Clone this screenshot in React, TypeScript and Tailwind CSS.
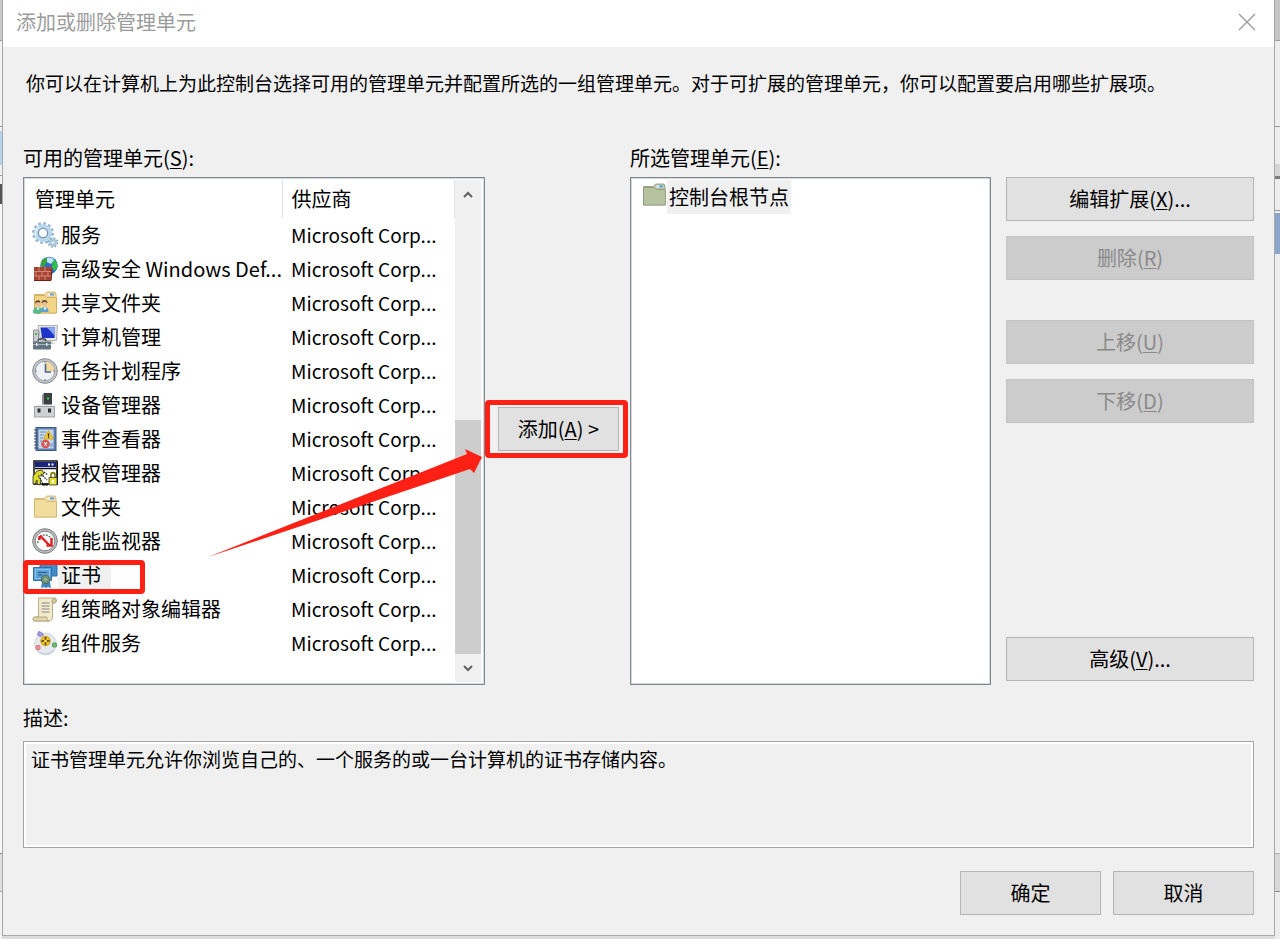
import type { ReactNode } from "react";
import { clsx } from "clsx";

function Icon({ children }: { children: ReactNode }) {
  return (
    <svg viewBox="0 0 26 26" className="h-[26px] w-[26px] shrink-0" aria-hidden="true">
      {children}
    </svg>
  );
}

function GearsIcon() {
  return (
    <Icon>
      <circle cx="11" cy="11" r="9.6" fill="none" stroke="#8fb4cf" strokeWidth="2.6" strokeDasharray="2.6 2.43" />
      <circle cx="11" cy="11" r="6.8" fill="none" stroke="#b9d6ea" strokeWidth="4.4" />
      <circle cx="11" cy="11" r="4.600" fill="#fff" stroke="#7396b6" strokeWidth="1.300" />
      <path d="M4 14a8 8 0 0 1 3-9" fill="none" stroke="#e4f1fa" strokeWidth="1.500" />
      <circle cx="21" cy="20.500" r="4.300" fill="none" stroke="#7f9fb8" strokeWidth="2" strokeDasharray="1.700 1.670" />
      <circle cx="21" cy="20.500" r="2.800" fill="none" stroke="#a9c8dd" strokeWidth="2.400" />
      <circle cx="21" cy="20.500" r="1.500" fill="#fff" stroke="#7f9fb8" strokeWidth=".5" />
    </Icon>
  );
}

function FirewallIcon() {
  return (
    <Icon>
      <circle cx="17" cy="9.500" r="8.700" fill="#2a6fd0" />
      <path d="M9 7c1-4 4-5 6-5l1 4-3 2-1 4-3 0z" fill="#39a33c" />
      <path d="M20 3c4 1 6 5 5.500 8l-3 4-3-4 1-3z" fill="#2fbf45" />
      <path d="M15 2c3-1 6 0 7 2l-3 4-4-2z" fill="#bfe6fa" />
      <path d="M2 11h18v5l-1 9H2z" fill="#a84334" />
      <path d="M2 15.500h17M2 20h17M7 11v4.500M13 11v4.500M4 15.500V20M10 15.500V20M16 15.500V20M7 20v5M13 20v5" stroke="#d89a86" strokeWidth=".8" fill="none" />
      <path d="M2 24.500h17l1-12" stroke="#6d1e18" fill="none" />
    </Icon>
  );
}

interface FolderShapeProps {
  body: string;
  tab: string;
  line: string;
}

function FolderShape({ body, tab, line }: FolderShapeProps) {
  return (
    <>
      <path d="M2.500 4.500h10l2-2.500h8.500l1 2v19h-21.500z" fill={tab} stroke={line} strokeWidth=".8" />
      <path d="M2.500 5.500h10.500l2 2h9.500v15.500h-22z" fill={body} stroke={line} strokeWidth=".8" />
      <rect x="15" y="3" width="8" height="3" rx="1" fill="#f4f8fa" stroke={line} strokeWidth=".5" />
      <rect x="18" y="3.600" width="4" height="1.700" fill="#4a9ae0" />
    </>
  );
}

function FolderIcon() {
  return (
    <Icon>
      <FolderShape body="#f3dd9c" tab="#f8e7b4" line="#cfae68" />
    </Icon>
  );
}

function RootFolderIcon() {
  return (
    <Icon>
      <FolderShape body="#b7c3a0" tab="#c5d0ae" line="#88947a" />
    </Icon>
  );
}

function SharedFolderIcon() {
  return (
    <Icon>
      <FolderShape body="#f3d588" tab="#f8e7b4" line="#cfa450" />
      <path d="M1 23c0-5 2-6 4.500-6s4 1 4.500 4l-2 3z" fill="#57b98a" />
      <path d="M8.500 22c0-4 2-5 4-5s4 1 4 5z" fill="#5aa2d4" />
      <circle cx="6" cy="14" r="2.500" fill="#e8bd94" />
      <circle cx="12.500" cy="13.500" r="2.500" fill="#e8bd94" />
      <path d="M3 13.500c0-4 5.500-4 5.500-1l-3-.5zM9.500 13c0-4 6-4 6 0l-3-1.500z" fill="#5b3f28" />
      <path d="M4.500 17.500l1.500 3 1.500-3zM11.500 17.500l1.500 3 1.500-3z" fill="#fff" />
    </Icon>
  );
}

function ComputerIcon() {
  return (
    <Icon>
      <path d="M1.500 6h5v12h-5z" fill="#c9ccd0" stroke="#8a8f95" />
      <rect x="3" y="9" width="2" height="2" fill="#42b842" />
      <path d="M6 1.500h19.500l-1 15H8.500z" fill="#e3e3df" stroke="#a5a5a0" strokeWidth=".8" />
      <path d="M8.500 3.500h14.500l-.5 10.500H10z" fill="#1c35c8" />
      <path d="M15 3.500h8l-.5 8z" fill="#8ca5f5" />
      <path d="M12 17h8l3 3h-9z" fill="#cfd0ce" />
      <path d="M6 17c0-3 8-3 8 0" fill="none" stroke="#394850" strokeWidth="1.300" />
      <rect x="1" y="17.500" width="18" height="8" rx="1" fill="#60737e" />
      <path d="M1 20.500h18" stroke="#a6b6be" />
      <rect x="4" y="19" width="1.500" height="3" fill="#dce2e4" />
      <rect x="14" y="19" width="1.500" height="3" fill="#dce2e4" />
    </Icon>
  );
}

function ClockIcon() {
  return (
    <Icon>
      <circle cx="13" cy="13" r="12.300" fill="#c4c8cb" stroke="#83888c" />
      <circle cx="13" cy="13" r="9.800" fill="#eef2f6" stroke="#9aa2a8" />
      <path d="M13 13V3.700a9.300 9.300 0 0 1 9.300 9.300z" fill="#f3d9a0" />
      <path d="M13.500 6v8h5.500" fill="none" stroke="#4b6488" strokeWidth="1.600" />
      <path d="M13 3.500v1.500M13 21v1.500M3.500 13H5M21 13h1.500" stroke="#777" />
    </Icon>
  );
}

function DeviceIcon() {
  return (
    <Icon>
      <path d="M10 4l2-3h8v13H10z" fill="#3c3f41" />
      <path d="M10 4l2-3v13h-2z" fill="#8c9092" />
      <rect x="15" y="5.500" width="2" height="2" fill="#2ee04a" />
      <path d="M4 12.500h17l1.500 3H2z" fill="#ececec" />
      <rect x="2.500" y="14.500" width="20" height="10.500" fill="#d0d1d3" stroke="#a2a4a6" />
      <rect x="5.500" y="16.500" width="3" height="4" fill="#303030" />
      <rect x="16" y="16.500" width="3" height="4" fill="#303030" />
    </Icon>
  );
}

function EventIcon() {
  return (
    <Icon>
      <rect x="4" y="1.500" width="20" height="23" fill="#5d80b0" stroke="#3d5a85" />
      <rect x="6.500" y="3.500" width="15" height="19" fill="#c6d8ee" />
      <path d="M8 6h6M8 9h4M8 12h3M8 15h2M18 18h3M18 20h3" stroke="#6e8fb8" />
      <path d="M2 4h4M2 7h4M2 10h4M2 13h4M2 16h4M2 19h4M2 22h4" stroke="#414d5c" />
      <path d="M16.500 4.500l5 8.500h-10z" fill="#f8cf2c" stroke="#bf9410" strokeWidth=".7" />
      <path d="M16.500 7.500v3M16.500 11v1" stroke="#222" strokeWidth="1.300" />
      <circle cx="13.500" cy="18" r="4.300" fill="#d85050" />
      <path d="M12 16.500l3 3m0-3l-3 3" stroke="#fff" strokeWidth="1.300" />
    </Icon>
  );
}

function AuthIcon() {
  return (
    <Icon>
      <rect x="2" y="1" width="23" height="23" fill="#fff" stroke="#111" strokeWidth="1.500" />
      <rect x="3" y="2" width="21" height="5" fill="#1a237e" />
      <path d="M16 4.500h2M19.500 4.500h2" stroke="#fff" strokeWidth="2" />
      <path d="M3 8.500h21M25.500 2v23" stroke="#111" strokeWidth="1.500" />
      <path d="M1 24v-8l4-5 5-1 2 3-2 3h-4l3 4-1 5-3-1v-4l-2 4z" fill="#dcdc28" stroke="#222" strokeWidth=".8" />
      <path d="M9 14l6 6m-7-2l3 6M12 12l4 3" stroke="#222" strokeWidth="1.200" strokeDasharray="1.500 1" />
      <path d="M19 18v-3c0-3 4-3 4 0v3" fill="none" stroke="#8a8510" strokeWidth="1.800" />
      <path d="M17 17.500h8v7.500h-8z" fill="#e8e030" stroke="#333" strokeWidth=".8" />
      <path d="M20 20h2v3h-2z" fill="#fff" />
      <path d="M10 24.500h6" stroke="#111" strokeWidth="2" />
    </Icon>
  );
}

function PerfIcon() {
  return (
    <Icon>
      <circle cx="13" cy="13" r="12.300" fill="#b9bcbc" stroke="#7c8080" />
      <circle cx="13" cy="13" r="9.800" fill="#fafafa" stroke="#888" />
      <path d="M6 15a7 7 0 0 1 14-2" fill="none" stroke="#69806c" strokeWidth="1.500" strokeDasharray="2 1.200" />
      <path d="M7.500 8v4M8 7.500l9.500 10M19.500 10v7.500h-5" fill="none" stroke="#dc2020" strokeWidth="2.400" />
    </Icon>
  );
}

function CertificateIcon() {
  return (
    <Icon>
      <path d="M8 1h17v13H8z" fill="#3f8cc8" stroke="#2d6ca3" />
      <path d="M1.500 5.500h18v13h-18z" fill="#5aa0d4" stroke="#2c70a8" />
      <path d="M3.500 7.500h14v9h-14z" fill="none" stroke="#8fc2e6" />
      <path d="M6 10.500h9M6 13h4" stroke="#255f92" />
      <path d="M10 20l-1 6 3-1 2 1 2-1 3 1-1-6z" fill="#3f86c4" />
      <circle cx="13.500" cy="17.500" r="4.300" fill="#70907a" stroke="#4e6b62" />
      <circle cx="13.500" cy="17.500" r="1.800" fill="#9bb48a" />
    </Icon>
  );
}

function ScrollIcon() {
  return (
    <Icon>
      <path d="M6.500 2h16c2.500 0 2.500 5 0 5h-2v14c0 3-2 4-3 4H3c-2.500 0-2.500-4 0-4h3.500z" fill="#f4ebcb" stroke="#a39a78" strokeWidth=".8" />
      <path d="M22 2c3 0 3 5 0 5h-2V4z" fill="#d6c898" stroke="#a39a78" strokeWidth=".8" />
      <path d="M3 21h12c0 2 0 4 2 4H3c-2.500 0-2.500-4 0-4z" fill="#e4d7aa" stroke="#a39a78" strokeWidth=".8" />
      <path d="M9.500 7h8M9.500 10h8M9.500 13h8M9.500 16h8" stroke="#85878e" strokeWidth="1.200" />
    </Icon>
  );
}

function ComponentIcon() {
  return (
    <Icon>
      <circle cx="13.500" cy="14" r="11" fill="#e6e9ec" stroke="#cdd2d7" strokeWidth=".8" />
      <path d="M5 20c4 5 13 5 17 0" fill="none" stroke="#c8d4e2" strokeWidth="1.500" />
      <circle cx="13.500" cy="11" r="4.800" fill="#f2c21c" stroke="#b98e25" strokeWidth=".8" />
      <path d="M13.500 7v8M9.500 11h8" stroke="#483406" strokeWidth="1.500" />
      <circle cx="13.500" cy="11" r="1.500" fill="#f7d955" />
      <path d="M6.500 1.500l3 1 2 2.500-3 1.500-3-1.500z" fill="#a59de4" stroke="#766cc4" strokeWidth=".8" />
      <rect x="4" y="15.500" width="4" height="4" rx="1" fill="#e79595" stroke="#d06060" strokeWidth=".8" />
      <rect x="20.500" y="13" width="4" height="4" rx="1" fill="#6bbb6b" stroke="#3f9445" strokeWidth=".8" />
    </Icon>
  );
}

const snapIns = [
  { name: "服务", icon: <GearsIcon /> },
  { name: "高级安全 Windows Def...", icon: <FirewallIcon /> },
  { name: "共享文件夹", icon: <SharedFolderIcon /> },
  { name: "计算机管理", icon: <ComputerIcon /> },
  { name: "任务计划程序", icon: <ClockIcon /> },
  { name: "设备管理器", icon: <DeviceIcon /> },
  { name: "事件查看器", icon: <EventIcon /> },
  { name: "授权管理器", icon: <AuthIcon /> },
  { name: "文件夹", icon: <FolderIcon /> },
  { name: "性能监视器", icon: <PerfIcon /> },
  { name: "证书", icon: <CertificateIcon />, selected: true },
  { name: "组策略对象编辑器", icon: <ScrollIcon /> },
  { name: "组件服务", icon: <ComponentIcon /> },
];

interface DialogButtonProps {
  label: string;
  hotkey?: string;
  suffix?: string;
  disabled?: boolean;
  className?: string;
}

function DialogButton({ label, hotkey, suffix, disabled, className }: DialogButtonProps) {
  return (
    <button
      type="button"
      disabled={disabled}
      className={clsx(
        "h-11 border border-[#b5b5b5] bg-[#e1e1e1] whitespace-pre",
        "disabled:border-[#c3c3c3] disabled:bg-[#cccccc] disabled:text-[#8a8a8a]",
        className,
      )}
    >
      {label}
      {hotkey && (
        <>
          (<span className="underline decoration-1 underline-offset-2">{hotkey}</span>)
        </>
      )}
      {suffix}
    </button>
  );
}

function ScrollButton({ label, d }: { label: string; d: string }) {
  return (
    <button type="button" aria-label={label} className="flex h-7 items-center justify-center">
      <svg viewBox="0 0 10 7" className="h-[7px] w-[10px]" aria-hidden="true">
        <path d={d} fill="none" stroke="#606060" strokeWidth="2" />
      </svg>
    </button>
  );
}

function ScrollBar() {
  return (
    <div className="flex w-[26px] shrink-0 flex-col bg-[#f0f0f0]">
      <ScrollButton label="向上滚动" d="M1 6l4-4 4 4" />
      <div className="flex-[212]" />
      <div className="flex-[234] bg-[#cdcdcd]" />
      <ScrollButton label="向下滚动" d="M1 1l4 4 4-4" />
    </div>
  );
}

function SnapInTable() {
  return (
    <div className="flex border border-[#828790] bg-white py-[2px] pr-[3px] pl-[2px] shadow-[inset_0_0_0_1px_#d5d7da]">
      <div className="min-w-0 flex-1 pb-[22px]">
        <table aria-labelledby="available-label" className="w-full table-fixed text-left whitespace-nowrap">
          <thead>
            <tr className="h-[38px]">
              <th className="w-[256px] border-r border-[#e3e3e3] pl-[9px] font-normal">管理单元</th>
              <th className="border-r border-[#e3e3e3] pl-[9px] font-normal">供应商</th>
            </tr>
          </thead>
          <tbody>
            {snapIns.map((item) => (
              <tr key={item.name} className="h-[34px]" aria-selected={item.selected}>
                <td className="p-0 pl-[6px]">
                  <div className="flex items-center">
                    {item.icon}
                    <span className={clsx("pr-[10px] pl-[3px]", item.selected && "bg-[#f0f0f0]")}>{item.name}</span>
                  </div>
                </td>
                <td className="p-0 pl-[9px] text-[19px]">Microsoft Corp...</td>
              </tr>
            ))}
          </tbody>
        </table>
      </div>
      <ScrollBar />
    </div>
  );
}

function LeftBackdrop() {
  return (
    <div className="flex w-[2px] shrink-0 flex-col bg-[#f2f2f2]" aria-hidden="true">
      <div className="h-[41px] border-b border-[#9a9a9a] bg-[#c9c9c9]" />
      <div className="h-[86px] border-b border-[#9a9a9a]" />
      <div className="mt-1 h-[34px] bg-[#b4d4ee]" />
      <div className="h-[11px] border-b border-[#9a9a9a]" />
      <div className="mt-2 h-5 bg-[#555555]" />
      <div className="h-[650px] border-b border-[#8a8a8a] bg-[#f7f7f7]" />
      <div className="h-[38px] border-b border-[#a8a8a8] bg-[#dedede]" />
    </div>
  );
}

function RightBackdrop() {
  return (
    <div className="flex w-[5px] shrink-0 flex-col bg-[#ededed]" aria-hidden="true">
      <div className="h-[41px] border-b border-[#9a9a9a] bg-[#c6c6c6]" />
      <div className="h-[86px] border-b border-[#9a9a9a]" />
      <div className="h-[37px]" />
      <div className="h-[12px] bg-[#d5d5d5]" />
      <div className="h-[3px] bg-[#7c7c7c]" />
      <div className="h-[32px] border-b border-[#9a9a9a]" />
      <div className="mt-[2px] h-[41px] bg-[#8ba6c8]" />
      <div className="h-[600px] border-b border-[#b5b5b5]" />
      <div className="h-[38px] border-b border-[#8f8f8f] bg-[#d9d9d9]" />
    </div>
  );
}

export default function App() {
  return (
    <div className="flex min-h-screen items-stretch bg-[#dcdcdc] font-['Noto_Sans_CJK_SC','Noto_Sans',sans-serif] text-[20px] leading-[30px] text-black">
      <LeftBackdrop />
      <div className="mb-[3px] flex min-w-0 flex-1 flex-col border-x border-b border-[#a8a8a8] bg-[#f0f0f0]">
        <header className="flex h-[47px] items-center justify-between bg-white pr-[18px] pb-1 pl-[13px] text-[#9b9b9b]">
          <h1>添加或删除管理单元</h1>
          <button type="button" aria-label="关闭">
            <svg viewBox="0 0 18 18" className="h-[18px] w-[18px]" aria-hidden="true">
              <path d="M1 1l16 16M17 1L1 17" stroke="#999999" strokeWidth="1.300" />
            </svg>
          </button>
        </header>

        <main className="px-5 pt-[21px] pb-5">
          <p className="pl-[3px] text-[19px]">
            你可以在计算机上为此控制台选择可用的管理单元并配置所选的一组管理单元。对于可扩展的管理单元，你可以配置要启用哪些扩展项。
          </p>

          <div className="relative mt-[45px] grid grid-cols-[462fr_145px_361fr_263px] gap-y-1">
            <div id="available-label">
              可用的管理单元(<span className="underline decoration-1 underline-offset-2">S</span>):
            </div>
            <div />
            <div id="selected-label">
              所选管理单元(<span className="underline decoration-1 underline-offset-2">E</span>):
            </div>
            <div />

            <SnapInTable />

            <div className="flex items-center pb-1">
              <div className="w-[143px] rounded-[4px] border-5 border-[#ff2015] py-[2px] pr-1 pl-2">
                <DialogButton label="添加" hotkey="A" suffix=" >" className="w-full" />
              </div>
            </div>

            <ul
              role="listbox"
              aria-labelledby="selected-label"
              className="border border-[#828790] bg-white p-[2px] shadow-[inset_0_0_0_1px_#d5d7da]"
            >
              <li role="option" aria-selected="true" className="flex items-start pl-2">
                <span className="pt-[2px]">
                  <RootFolderIcon />
                </span>
                <span className="bg-[#f0f0f0] px-[2px] py-[2px]">控制台根节点</span>
              </li>
            </ul>

            <div className="flex flex-col gap-[15px] pb-1 pl-[15px]">
              <DialogButton label="编辑扩展" hotkey="X" suffix="..." />
              <DialogButton label="删除" hotkey="R" disabled />
              <DialogButton label="上移" hotkey="U" disabled className="mt-[25px]" />
              <DialogButton label="下移" hotkey="D" disabled />
              <DialogButton label="高级" hotkey="V" suffix="..." className="mt-auto" />
            </div>

            {/* callouts drawn over the list */}
            <div className="pointer-events-none absolute top-[417px] left-0 h-[34px] w-[122px] rounded-[4px] border-5 border-[#ff2015]" />
            <svg
              viewBox="0 0 274 110"
              className="pointer-events-none absolute top-[306px] left-[185px] h-[110px] w-[274px]"
              aria-hidden="true"
            >
              <path d="M0 108L259 5l-2-5 17 8-8 16-4-4-160 54z" fill="#ff2015" />
            </svg>
          </div>

          <label htmlFor="description" className="mt-[18px] block">
            描述:
          </label>
          <textarea
            id="description"
            readOnly
            value="证书管理单元允许你浏览自己的、一个服务的或一台计算机的证书存储内容。"
            className="mt-2 block h-[107px] w-full resize-none border border-[#a5a5a5] bg-[#f0f0f0] px-[7px] py-[2px] text-[19px] shadow-[inset_0_0_0_2px_#ffffff] outline-none"
          />

          <div className="mt-[23px] flex justify-end gap-3">
            <DialogButton label="确定" className="w-[141px]" />
            <DialogButton label="取消" className="w-[141px]" />
          </div>
        </main>
      </div>
      <RightBackdrop />
    </div>
  );
}
